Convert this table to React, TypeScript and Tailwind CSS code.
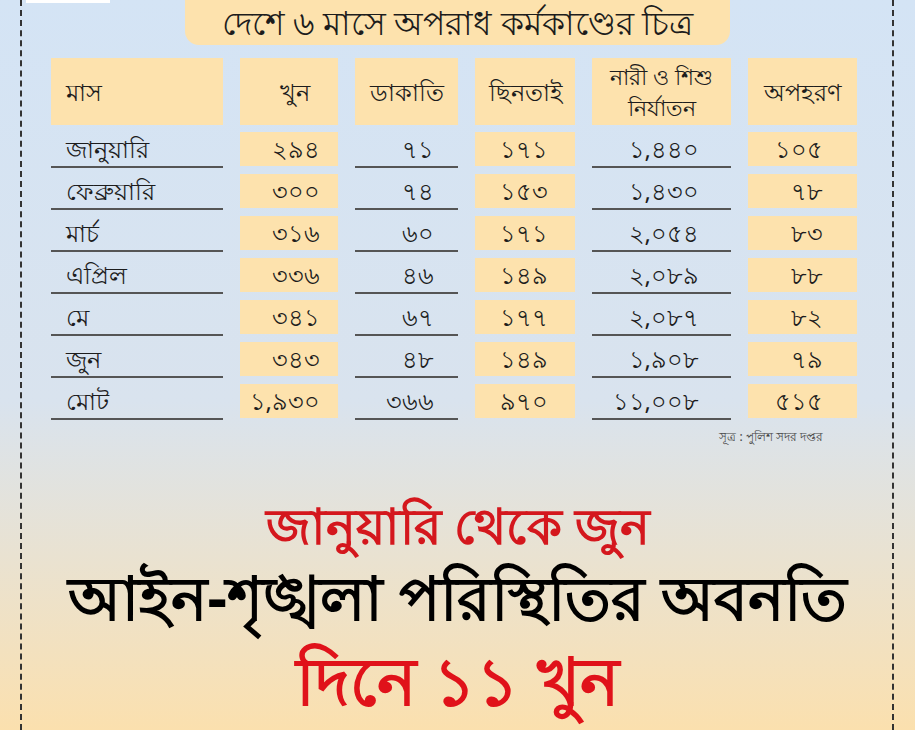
import React from 'react'

const rows = [
  { month: 'জানুয়ারি', khun: '২৯৪', dakati: '৭১', chhintai: '১৭১', nari: '১,৪৪০', apaharan: '১০৫' },
  { month: 'ফেব্রুয়ারি', khun: '৩০০', dakati: '৭৪', chhintai: '১৫৩', nari: '১,৪৩০', apaharan: '৭৮' },
  { month: 'মার্চ', khun: '৩১৬', dakati: '৬০', chhintai: '১৭১', nari: '২,০৫৪', apaharan: '৮৩' },
  { month: 'এপ্রিল', khun: '৩৩৬', dakati: '৪৬', chhintai: '১৪৯', nari: '২,০৮৯', apaharan: '৮৮' },
  { month: 'মে', khun: '৩৪১', dakati: '৬৭', chhintai: '১৭৭', nari: '২,০৮৭', apaharan: '৮২' },
  { month: 'জুন', khun: '৩৪৩', dakati: '৪৮', chhintai: '১৪৯', nari: '১,৯০৮', apaharan: '৭৯' },
  { month: 'মোট', khun: '১,৯৩০', dakati: '৩৬৬', chhintai: '৯৭০', nari: '১১,০০৮', apaharan: '৫১৫' },
]

const grid = 'grid grid-cols-[172px_98px_103px_100px_139px_109px] gap-x-[17px]'

export default function App() {
  return (
    <div className="relative w-[915px] h-[730px] overflow-hidden bg-gradient-to-b from-[#d4e4f5] via-[#d9e3ee] via-55% to-[#fbe0ae] font-['Noto_Sans',sans-serif] text-[#1c1c1c]">
      {/* dashed frame lines */}
      <div className="absolute left-[20px] top-0 bottom-0 border-l-2 border-dashed border-[#333]" />
      <div className="absolute left-[892px] top-0 bottom-0 border-l-2 border-dashed border-[#333]" />
      <div className="absolute left-[26px] top-0 w-[84px] h-[3px] bg-white" />

      <div className="flex justify-center">
        <div className="w-[545px] h-[45px] rounded-b-[14px] bg-[#fde2ad] flex items-center justify-center text-[33px] leading-none">
          দেশে ৬ মাসে অপরাধ কর্মকাণ্ডের চিত্র
        </div>
      </div>

      <div className="ml-[51px] mt-[13px]">
        {/* header */}
        <div className={`${grid} h-[67px] text-[24px] leading-[26px]`}>
          <div className="bg-[#fde2ad] flex items-center pl-[15px]">মাস</div>
          <div className="bg-[#fde2ad] flex items-center justify-center pl-[12px]">খুন</div>
          <div className="bg-[#fde2ad] flex items-center justify-center">ডাকাতি</div>
          <div className="bg-[#fde2ad] flex items-center justify-center">ছিনতাই</div>
          <div className="bg-[#fde2ad] flex flex-col items-center justify-center text-center text-[22px] leading-[31px]">
            <span>নারী ও শিশু</span>
            <span>নির্যাতন</span>
          </div>
          <div className="bg-[#fde2ad] flex items-center justify-center">অপহরণ</div>
        </div>

        {/* body */}
        <div className="mt-[7px]">
          {rows.map(r => (
            <div key={r.month} className={`${grid} h-[42px] text-[24px]`}>
              <div className="h-[36px] border-b-2 border-[#555] flex items-center pl-[15px]">{r.month}</div>
              <div className="h-[34px] bg-[#fde2ad] flex items-center justify-end pr-[18px]">{r.khun}</div>
              <div className="h-[36px] border-b-2 border-[#555] flex items-center justify-end pr-[24px]">{r.dakati}</div>
              <div className="h-[34px] bg-[#fde2ad] flex items-center justify-end pr-[27px]">{r.chhintai}</div>
              <div className="h-[36px] border-b-2 border-[#555] flex items-center justify-end pr-[32px]">{r.nari}</div>
              <div className="h-[34px] bg-[#fde2ad] flex items-center justify-end pr-[34px]">{r.apaharan}</div>
            </div>
          ))}
        </div>

        <div className="w-[772px] text-right text-[12px] text-[#444] mt-[2px]">সূত্র : পুলিশ সদর দপ্তর</div>
      </div>

      {/* headline */}
      <div className="mt-[48px] flex flex-col items-center">
        <div className="text-[50px] leading-[62px] font-bold text-[#d4171d]">জানুয়ারি থেকে জুন</div>
        <div className="text-[61px] leading-[82px] font-bold text-black">আইন-শৃঙ্খলা পরিস্থিতির অবনতি</div>
        <div className="text-[66px] leading-[82px] font-bold text-[#e0121a]">দিনে ১১ খুন</div>
      </div>
    </div>
  )
}
